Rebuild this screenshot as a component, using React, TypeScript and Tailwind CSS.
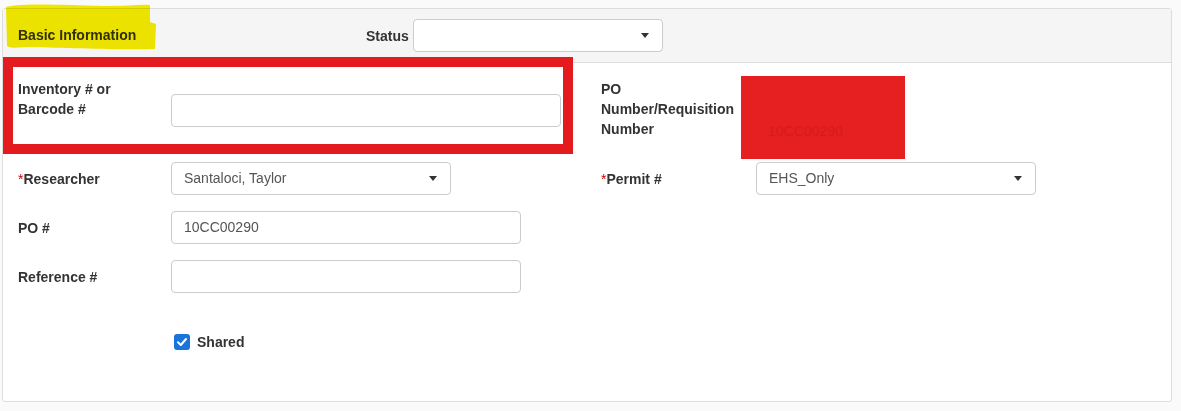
import React from "react";

const font = { fontFamily: '"Liberation Sans", Arial, sans-serif' };

function Caret() {
  return (
    <svg width="8" height="5" viewBox="0 0 8 5" className="shrink-0">
      <path d="M0 0 L8 0 L4 5 Z" fill="#333" />
    </svg>
  );
}

function SelectBox({ value, width }: { value?: string; width: string }) {
  return (
    <div
      className={`flex h-[33px] ${width} items-center justify-between rounded-[4px] border border-[#ccc] bg-white pr-[13px] pl-3 text-[14px] text-[#555]`}
    >
      <span>{value ?? ""}</span>
      <Caret />
    </div>
  );
}

function TextBox({ value, width }: { value?: string; width: string }) {
  return (
    <div
      className={`flex h-[33px] ${width} items-center rounded-[4px] border border-[#ccc] bg-white pl-3 text-[14px] text-[#555]`}
    >
      {value ?? ""}
    </div>
  );
}

function Label({
  children,
  required,
  className = "",
}: {
  children: React.ReactNode;
  required?: boolean;
  className?: string;
}) {
  return (
    <div className={`text-[14px] leading-5 font-bold text-[#333] ${className}`}>
      {required && <span className="font-normal text-[#c00]">*</span>}
      {children}
    </div>
  );
}

export default function App() {
  return (
    <div
      className="relative h-[411px] w-[1181px] overflow-hidden bg-[#fafafa] pt-[8px] pl-[2px]"
      style={font}
    >
      {/* Panel */}
      <div className="h-[394px] w-[1170px] rounded-[3px] border border-[#ddd] bg-white">
        {/* Heading */}
        <div className="flex h-[54px] items-center border-b border-[#ddd] bg-[#f5f5f5] pl-[15px]">
          <div className="w-[348px] text-[14px] font-bold text-[#333]">
            Basic Information
          </div>
          <Label className="mr-[4px]">Status</Label>
          <SelectBox width="w-[250px]" />
        </div>

        {/* Body */}
        <div className="flex px-[15px] pt-[16px]">
          {/* Left column */}
          <div className="w-[583px]">
            <div className="flex h-[83px] items-start">
              <div className="w-[153px]">
                <Label className="max-w-[120px]">Inventory # or Barcode #</Label>
              </div>
              <div className="mt-[15px]">
                <TextBox width="w-[390px]" />
              </div>
            </div>
            <div className="flex flex-col gap-4">
              <div className="flex h-[33px] items-center">
                <Label required className="w-[153px]">
                  Researcher
                </Label>
                <SelectBox value="Santaloci, Taylor" width="w-[280px]" />
              </div>
              <div className="flex h-[33px] items-center">
                <Label className="w-[153px]">PO #</Label>
                <TextBox value="10CC00290" width="w-[350px]" />
              </div>
              <div className="flex h-[33px] items-center">
                <Label className="w-[153px]">Reference #</Label>
                <TextBox width="w-[350px]" />
              </div>
            </div>
            <div className="mt-[39px] flex items-center pl-[156px]">
              <span className="flex h-4 w-4 items-center justify-center rounded-[3px] bg-[#1b74dc]">
                <svg width="12" height="12" viewBox="0 0 12 12">
                  <path
                    d="M2 6.3 L4.8 9 L10 3"
                    fill="none"
                    stroke="#fff"
                    strokeWidth="2"
                    strokeLinecap="round"
                    strokeLinejoin="round"
                  />
                </svg>
              </span>
              <Label className="ml-[7px]">Shared</Label>
            </div>
          </div>

          {/* Right column */}
          <div>
            <div className="flex h-[83px] items-start">
              <div className="w-[155px]">
                <Label className="max-w-[140px]">PO Number/Requisition Number</Label>
              </div>
            </div>
            <div className="flex h-[33px] items-center">
              <Label required className="w-[155px]">
                Permit #
              </Label>
              <SelectBox value="EHS_Only" width="w-[280px]" />
            </div>
          </div>
        </div>
      </div>

      {/* Markup: highlighter over the heading */}
      <svg
        className="pointer-events-none absolute top-[2px] left-[4px] mix-blend-multiply"
        width="154"
        height="50"
        viewBox="0 0 154 50"
      >
        <path
          d="M2 5 C20 1 60 3 100 4 C120 4 140 2 146 3 L146 20 L152 22 L151 47 C120 48 60 46 30 45 C15 45 6 47 3 44 Z"
          fill="#f5ec00"
        />
      </svg>

      {/* Markup: red frame round the inventory field */}
      <div className="pointer-events-none absolute top-[57px] left-[3px] h-[97px] w-[570px] border-[10px] border-[#e31b1f]" />

      {/* Markup: red block over the requisition number */}
      <div className="pointer-events-none absolute top-[76px] left-[741px] h-[83px] w-[164px] bg-[#e62020] pt-[45px] pl-[27px] text-[14px] text-[#d81a1a]">
        10CC00290
      </div>
    </div>
  );
}
